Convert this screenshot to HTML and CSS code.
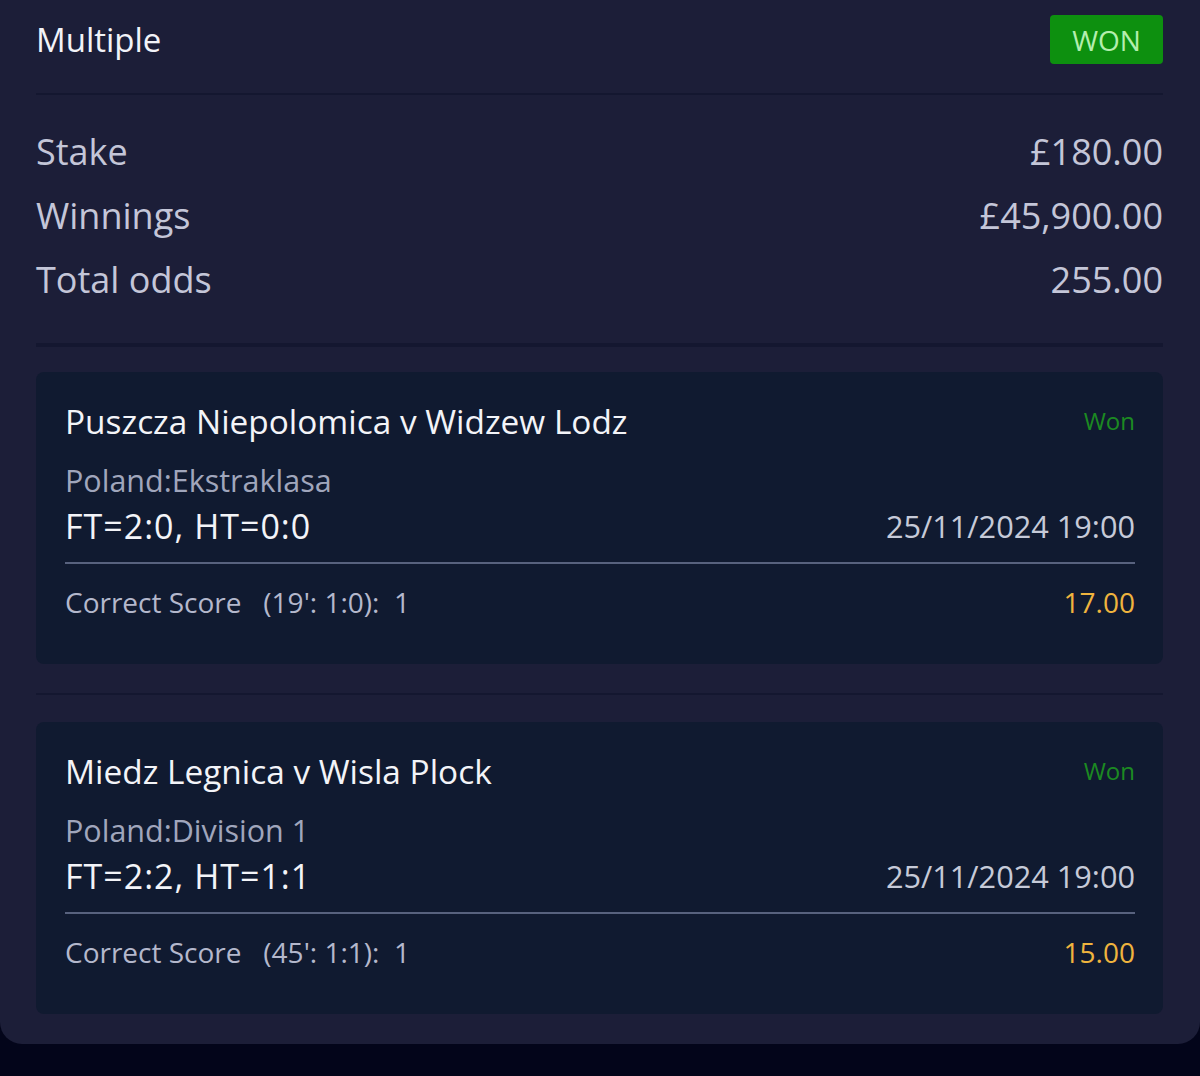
FILE: index.html
```html
<!DOCTYPE html>
<html lang="en">
<head>
<meta charset="utf-8">
<title>Multiple</title>
<link rel="stylesheet" href="styles.css">
</head>
<body>
<div class="panel">
  <div class="header">
    <div class="title">Multiple</div>
    <div class="badge">WON</div>
  </div>
  <div class="divider"></div>
  <div class="summary">
    <div class="row"><span class="label">Stake</span><span class="value">£180.00</span></div>
    <div class="row"><span class="label">Winnings</span><span class="value">£45,900.00</span></div>
    <div class="row"><span class="label">Total odds</span><span class="value">255.00</span></div>
  </div>
  <div class="divider thick"></div>

  <div class="card">
    <div class="card-head">
      <div class="match">Puszcza Niepolomica v Widzew Lodz</div>
      <div class="status">Won</div>
    </div>
    <div class="league">Poland:Ekstraklasa</div>
    <div class="score-row">
      <div class="score">FT=2:0, HT=0:0</div>
      <div class="date">25/11/2024 19:00</div>
    </div>
    <div class="card-line"></div>
    <div class="pick-row">
      <div class="pick">Correct Score   (19': 1:0):  1</div>
      <div class="odds">17.00</div>
    </div>
  </div>

  <div class="divider mid"></div>

  <div class="card">
    <div class="card-head">
      <div class="match">Miedz Legnica v Wisla Plock</div>
      <div class="status">Won</div>
    </div>
    <div class="league">Poland:Division 1</div>
    <div class="score-row">
      <div class="score">FT=2:2, HT=1:1</div>
      <div class="date">25/11/2024 19:00</div>
    </div>
    <div class="card-line"></div>
    <div class="pick-row">
      <div class="pick">Correct Score   (45': 1:1):  1</div>
      <div class="odds">15.00</div>
    </div>
  </div>
</div>
</body>
</html>
```

FILE: styles.css
```css
html, body {
  margin: 0;
  padding: 0;
  background: #03051a;
}
body {
  font-family: "Open Sans", "Noto Sans", sans-serif;
  width: 1200px;
  height: 1076px;
  overflow: hidden;
}
.panel {
  background: #1c1e38;
  padding: 15px 37px 30px 36px;
  border-radius: 0 0 22px 22px;
}
.header {
  display: flex;
  justify-content: space-between;
  align-items: center;
  height: 49px;
  margin-bottom: 29px;
}
.title {
  color: #f2f3f8;
  font-size: 33px;
  line-height: 49px;
  margin-top: -1px;
}
.badge {
  width: 113px;
  height: 49px;
  box-sizing: border-box;
  background: #0d900f;
  border-radius: 4px;
  color: #b4eeae;
  font-size: 28px;
  line-height: 51px;
  text-align: center;
}
.divider {
  height: 2px;
  background: #141730;
}
.divider.thick {
  height: 4px;
  margin-top: 31px;
  margin-bottom: 25px;
}
.divider.mid {
  margin-top: 29px;
  margin-bottom: 27px;
}
.summary {
  padding-top: 25px;
}
.row {
  display: flex;
  justify-content: space-between;
  height: 64px;
  line-height: 64px;
  font-size: 36px;
  color: #c4c6d8;
}
.card {
  background: #101a30;
  border-radius: 8px;
  padding: 29px 28px 44px 29px;
}
.card-head {
  display: flex;
  justify-content: space-between;
  align-items: center;
  height: 40px;
}
.match {
  color: #f3f4f8;
  font-size: 33.4px;
  line-height: 38px;
}
.status {
  color: #1c8a22;
  font-size: 24px;
  line-height: 40px;
}
.league {
  margin-top: 22px;
  color: #a0a6bc;
  font-size: 30.5px;
  line-height: 34px;
}
.score-row {
  display: flex;
  justify-content: space-between;
  align-items: center;
  margin-top: 9px;
  height: 40px;
}
.score {
  color: #f3f4f8;
  font-size: 34px;
  letter-spacing: 1px;
  line-height: 38px;
}
.date {
  color: #c6cad8;
  font-size: 30.7px;
  line-height: 38px;
}
.card-line {
  margin-top: 16px;
  height: 2px;
  background: #58627e;
}
.pick-row {
  display: flex;
  justify-content: space-between;
  align-items: center;
  margin-top: 20px;
  height: 36px;
}
.pick {
  color: #b4b8cc;
  font-size: 28px;
  line-height: 34px;
  white-space: pre;
}
.odds {
  color: #efb43e;
  font-size: 28px;
  line-height: 34px;
}
```
